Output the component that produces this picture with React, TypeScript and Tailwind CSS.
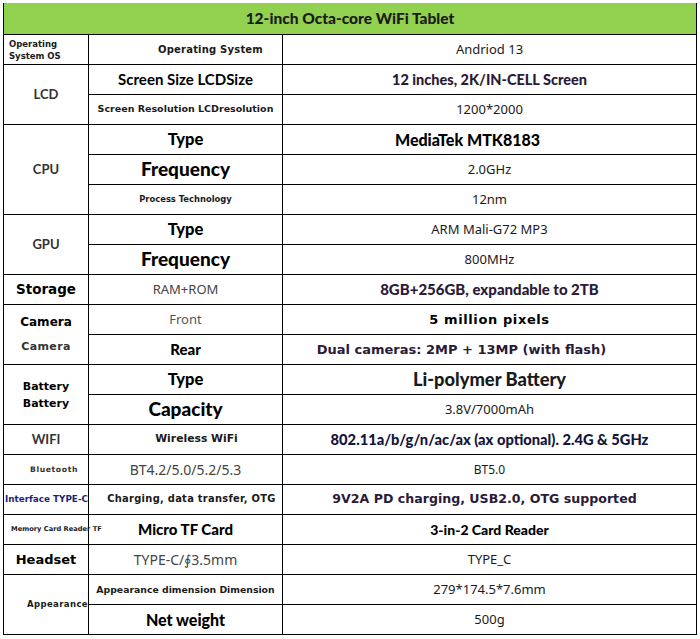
import React from 'react';

const lato = "font-['Lato',sans-serif] font-bold";
const latoH = "font-['Lato',sans-serif] font-black";
const deja = "font-['DejaVu_Sans',sans-serif] font-bold";
const noto = "font-['Noto_Sans',sans-serif]";

const Cell: React.FC<{ className?: string; children?: React.ReactNode }> = ({ className = '', children }) => (
  <div className={`border-r border-b border-black flex items-center justify-center whitespace-nowrap ${className}`}>
    {children}
  </div>
);

export default function App() {
  return (
    <div className="w-[700px] h-[639px] bg-white pt-[3px] pl-[3px]">
      <div className="w-[693px] grid grid-cols-[85px_194px_414px] grid-rows-[32px_repeat(20,30px)] border-l border-black">
        {/* title bar */}
        <Cell className={`col-span-3 bg-[#92d050] text-[15.5px] text-[#1a1a1a] ${latoH}`}>
          12-inch Octa-core WiFi Tablet
        </Cell>

        {/* OS */}
        <Cell className={`justify-start pl-[5px] text-[8.5px] leading-[12px] text-[#1a1a1a] ${deja}`}>
          <span>Operating<br />System OS</span>
        </Cell>
        <Cell className={`pl-[50px] text-[10px] tracking-[0.2px] text-[#1a1a1a] ${deja}`}>Operating System</Cell>
        <Cell className={`text-[13px] text-[#1a1a1a] ${noto}`}>Andriod 13</Cell>

        {/* LCD */}
        <Cell className={`row-span-2 text-[13px] text-[#333] ${lato}`}>LCD</Cell>
        <Cell className={`text-[15px] text-black ${lato}`}>Screen Size LCDSize</Cell>
        <Cell className={`text-[14.5px] text-[#2b1a38] ${latoH}`}>12 inches, 2K/IN-CELL Screen</Cell>
        <Cell className={`text-[9.5px] text-[#1a1a1a] ${deja}`}>Screen Resolution LCDresolution</Cell>
        <Cell className={`text-[13px] text-[#1a1a1a] ${noto}`}>1200*2000</Cell>

        {/* CPU */}
        <Cell className={`row-span-3 text-[13px] text-[#333] ${lato}`}>CPU</Cell>
        <Cell className={`text-[16.5px] text-black ${latoH}`}>Type</Cell>
        <Cell className={`pr-[44px] text-[16px] text-black ${latoH}`}>MediaTek MTK8183</Cell>
        <Cell className={`text-[19px] text-black ${latoH}`}>Frequency</Cell>
        <Cell className={`text-[13px] text-[#1a1a1a] ${noto}`}>2.0GHz</Cell>
        <Cell className={`text-[8.4px] text-[#1a1a1a] ${deja}`}>Process Technology</Cell>
        <Cell className={`text-[13px] text-[#1a1a1a] ${noto}`}>12nm</Cell>

        {/* GPU */}
        <Cell className={`row-span-2 text-[13px] text-[#333] ${lato}`}>GPU</Cell>
        <Cell className={`text-[16.5px] text-black ${latoH}`}>Type</Cell>
        <Cell className={`text-[13px] text-[#1a1a1a] ${noto}`}>ARM Mali-G72 MP3</Cell>
        <Cell className={`text-[19px] text-black ${latoH}`}>Frequency</Cell>
        <Cell className={`text-[13px] text-[#1a1a1a] ${noto}`}>800MHz</Cell>

        {/* Storage */}
        <Cell className={`text-[13.5px] text-black ${deja}`}>Storage</Cell>
        <Cell className={`text-[13px] text-[#444] ${noto}`}>RAM+ROM</Cell>
        <Cell className={`text-[15px] text-[#2b1a38] ${latoH}`}>8GB+256GB, expandable to 2TB</Cell>

        {/* Camera */}
        <Cell className="row-span-2 flex-col gap-[8px]">
          <span className={`text-[12px] text-black ${deja}`}>Camera</span>
          <span className={`text-[11px] tracking-[0.4px] text-[#333] ${deja}`}>Camera</span>
        </Cell>
        <Cell className={`text-[13px] text-[#555] ${noto}`}>Front</Cell>
        <Cell className={`text-[13px] tracking-[0.6px] text-black ${deja}`}>5 million pixels</Cell>
        <Cell className={`text-[15px] text-black ${latoH}`}>Rear</Cell>
        <Cell className={`pr-[56px] text-[13px] text-[#2b1a38] ${deja}`}>Dual cameras: 2MP + 13MP (with flash)</Cell>

        {/* Battery */}
        <Cell className={`row-span-2 text-[11px] leading-[17px] text-black ${deja}`}>
          <span className="text-center">Battery<br />Battery</span>
        </Cell>
        <Cell className={`text-[16.5px] text-black ${latoH}`}>Type</Cell>
        <Cell className={`text-[18.3px] text-[#1a1a1a] ${latoH}`}>Li-polymer Battery</Cell>
        <Cell className={`text-[19px] text-black ${latoH}`}>Capacity</Cell>
        <Cell className={`text-[13px] text-[#1a1a1a] ${noto}`}>3.8V/7000mAh</Cell>

        {/* WiFi */}
        <Cell className={`text-[13px] text-[#333] ${lato}`}>WIFI</Cell>
        <Cell className={`pl-[22px] text-[10.8px] text-[#1a1a1a] ${deja}`}>Wireless WiFi</Cell>
        <Cell className={`text-[14.7px] text-[#14143c] ${latoH}`}>802.11a/b/g/n/ac/ax (ax optional). 2.4G &amp; 5GHz</Cell>

        {/* Bluetooth */}
        <Cell className={`pl-[16px] text-[7.7px] tracking-[0.6px] text-[#333] ${deja}`}>Bluetooth</Cell>
        <Cell className={`text-[14px] text-[#444] ${noto}`}>BT4.2/5.0/5.2/5.3</Cell>
        <Cell className={`text-[12px] text-[#1a1a1a] ${noto}`}>BT5.0</Cell>

        {/* Interface */}
        <Cell className={`justify-start pl-[1px] text-[8.8px] text-[#1f1f7a] ${deja}`}>Interface TYPE-C</Cell>
        <Cell className={`pl-[12px] text-[9.9px] tracking-[0.3px] text-[#1a1a1a] ${deja}`}>Charging, data transfer, OTG</Cell>
        <Cell className={`pr-[10px] text-[12.6px] text-[#2b1a38] ${deja}`}>9V2A PD charging, USB2.0, OTG supported</Cell>

        {/* Memory card */}
        <Cell className={`justify-start pl-[7px] text-[6.7px] text-[#1a1a1a] ${deja}`}>Memory Card Reader TF</Cell>
        <Cell className={`text-[15px] text-black ${latoH}`}>Micro TF Card</Cell>
        <Cell className={`text-[14px] text-black ${latoH}`}>3-in-2 Card Reader</Cell>

        {/* Headset */}
        <Cell className={`text-[13px] text-black ${deja}`}>Headset</Cell>
        <Cell className={`text-[14px] text-[#444] ${noto}`}>TYPE-C/∮3.5mm</Cell>
        <Cell className={`text-[13px] text-[#1a1a1a] ${noto}`}>TYPE_C</Cell>

        {/* Appearance */}
        <Cell className={`row-span-2 justify-end text-[8.5px] tracking-[0.4px] text-[#1a1a1a] ${deja}`}>Appearance</Cell>
        <Cell className={`text-[9.3px] text-[#1a1a1a] ${deja}`}>Appearance dimension Dimension</Cell>
        <Cell className={`text-[13px] text-[#1a1a1a] ${noto}`}>279*174.5*7.6mm</Cell>
        <Cell className={`text-[16px] text-black ${latoH}`}>Net weight</Cell>
        <Cell className={`text-[13px] text-[#1a1a1a] ${noto}`}>500g</Cell>
      </div>
    </div>
  );
}
